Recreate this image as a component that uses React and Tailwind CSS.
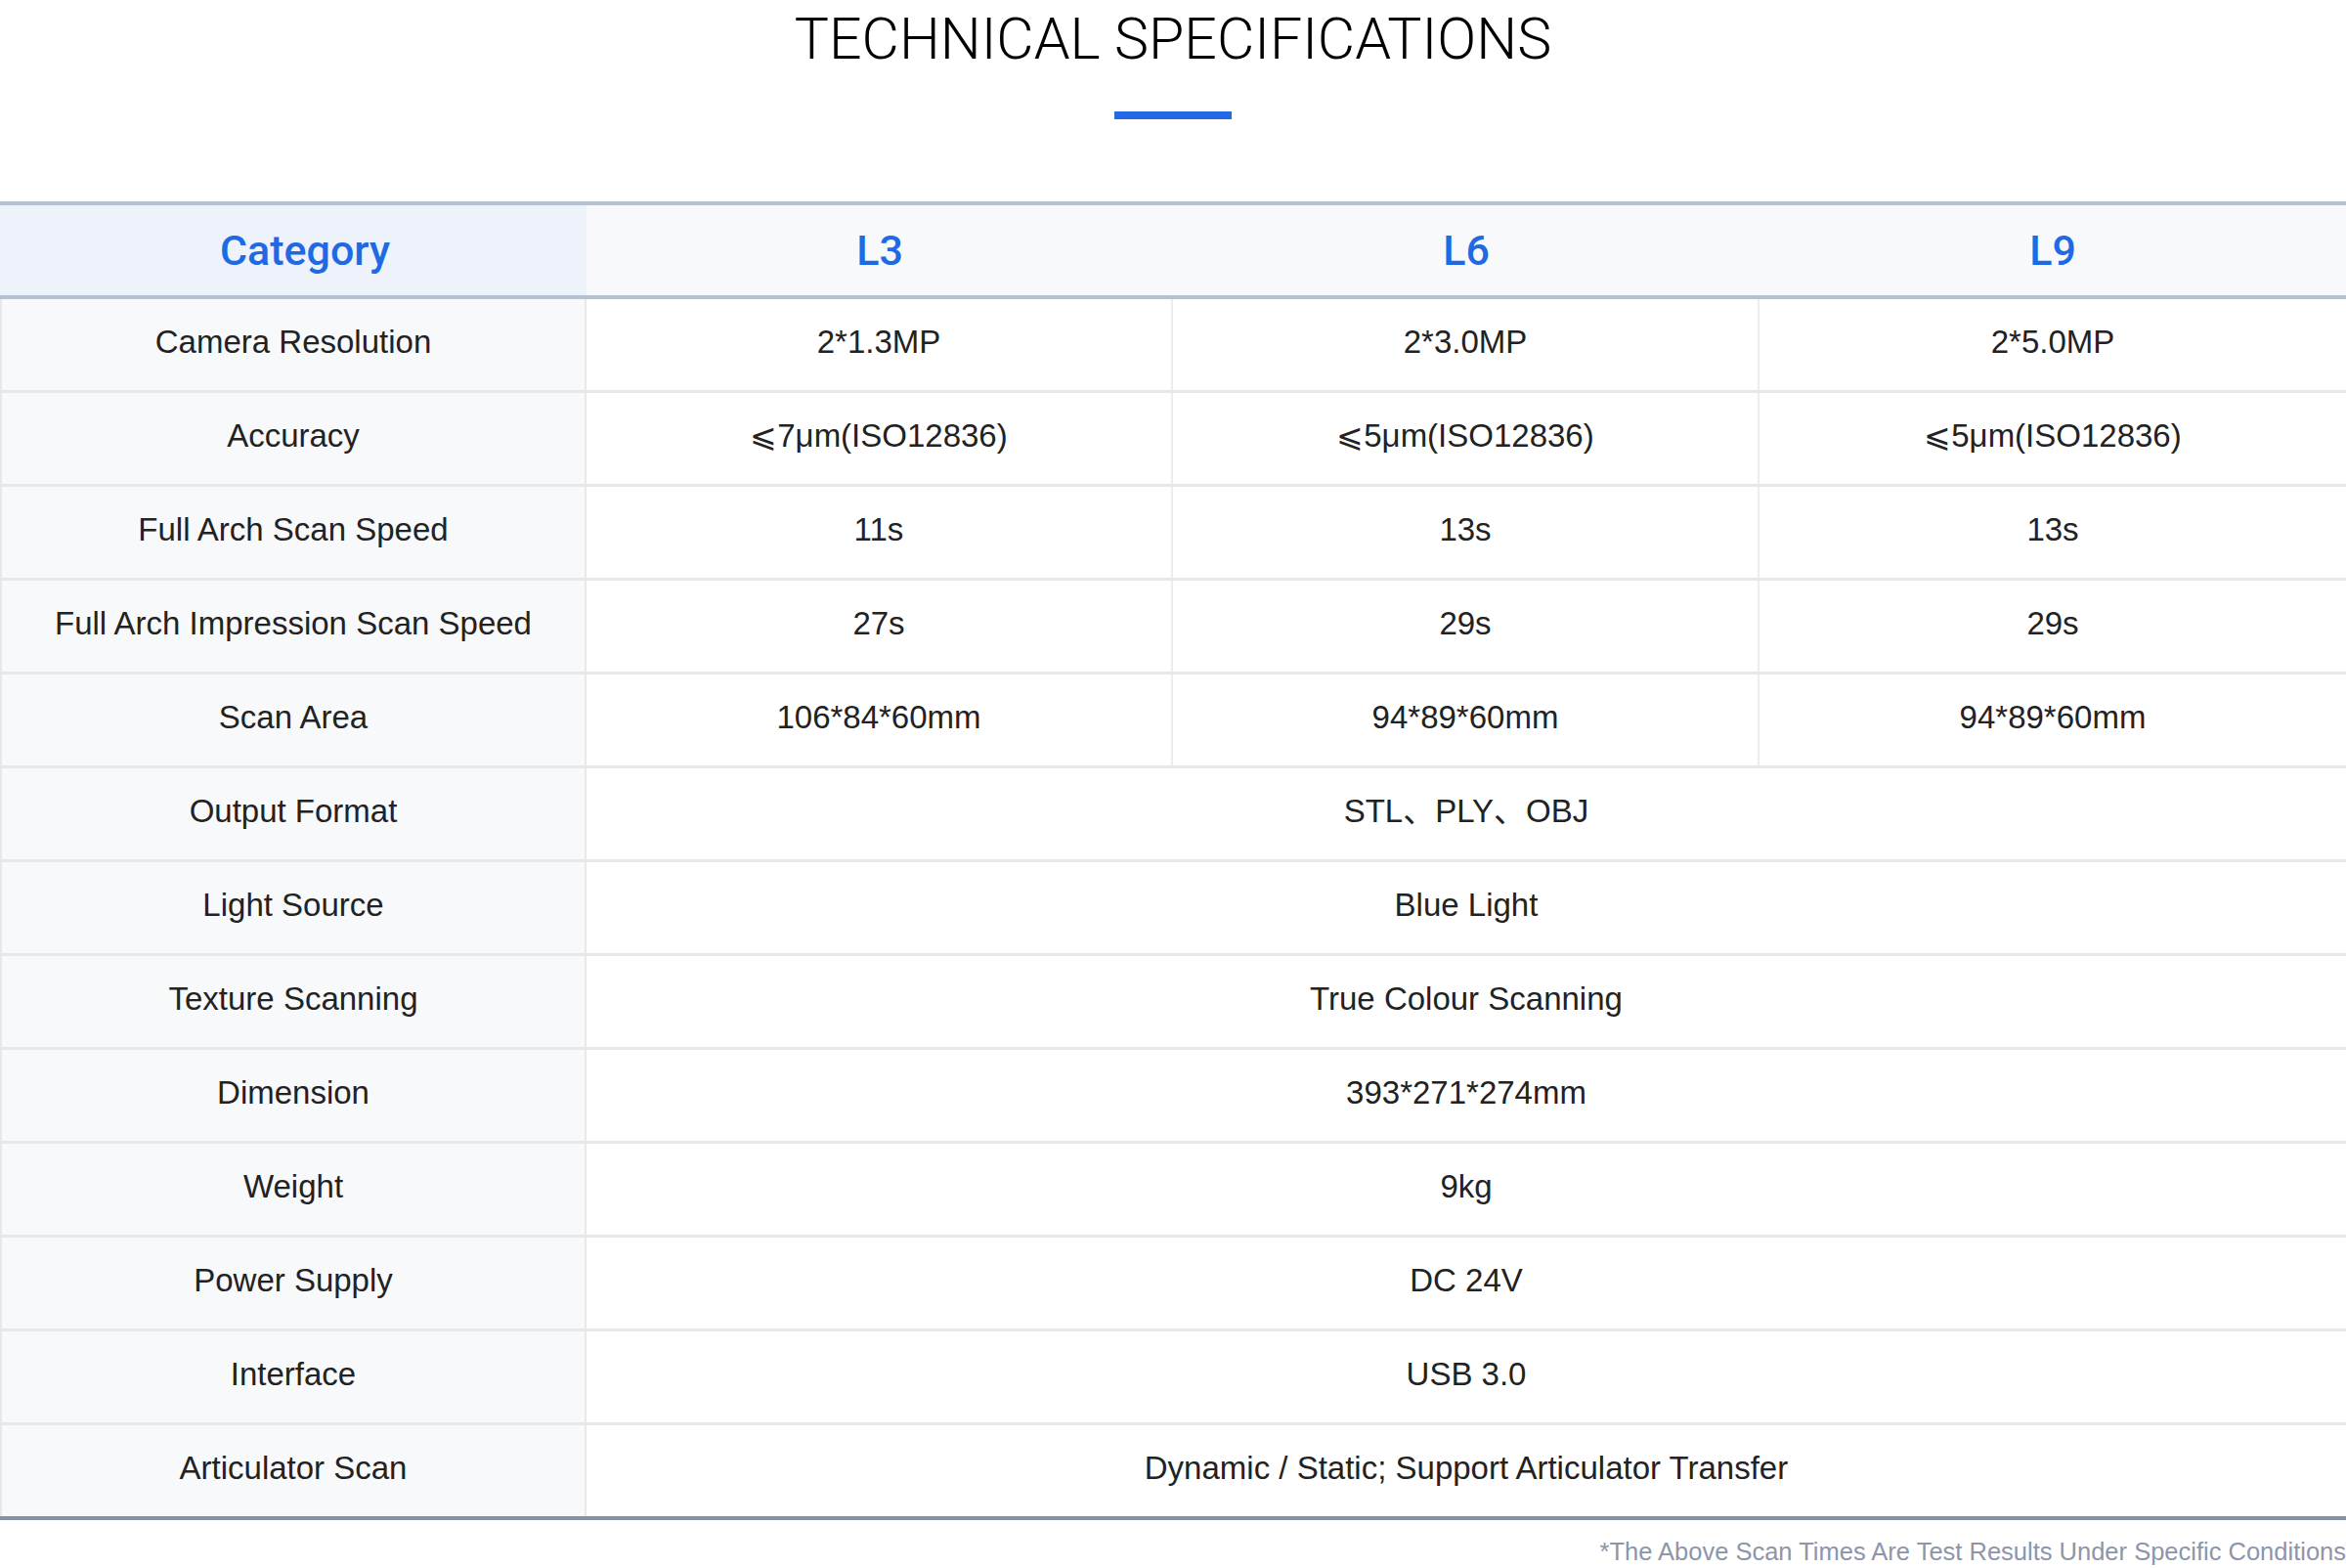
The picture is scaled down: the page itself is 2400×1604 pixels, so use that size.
const models = ['L3', 'L6', 'L9'];

const specs = [
  { label: 'Camera Resolution', values: ['2*1.3MP', '2*3.0MP', '2*5.0MP'] },
  { label: 'Accuracy', values: ['⩽7μm(ISO12836)', '⩽5μm(ISO12836)', '⩽5μm(ISO12836)'] },
  { label: 'Full Arch Scan Speed', values: ['11s', '13s', '13s'] },
  { label: 'Full Arch Impression Scan Speed', values: ['27s', '29s', '29s'] },
  { label: 'Scan Area', values: ['106*84*60mm', '94*89*60mm', '94*89*60mm'] },
  { label: 'Output Format', value: 'STL、PLY、OBJ' },
  { label: 'Light Source', value: 'Blue Light' },
  { label: 'Texture Scanning', value: 'True Colour Scanning' },
  { label: 'Dimension', value: '393*271*274mm' },
  { label: 'Weight', value: '9kg' },
  { label: 'Power Supply', value: 'DC 24V' },
  { label: 'Interface', value: 'USB 3.0' },
  { label: 'Articulator Scan', value: 'Dynamic / Static; Support Articulator Transfer' },
];

const bodyFont = "font-['Liberation_Sans','Noto_Sans_CJK_SC',sans-serif]";

function SpecRow({ spec, last }) {
  return (
    <div className={`grid grid-cols-4 ${last ? 'h-[93px]' : 'h-[96px] border-b-[3px] border-[#e8e8e8]'}`}>
      <div className="flex items-center justify-center pb-[5px] bg-[#f8f9fb] border-l-2 border-r-2 border-[#e8e8e8]">
        {spec.label}
      </div>
      {spec.values ? (
        spec.values.map((v, i) => (
          <div
            key={i}
            className={`flex items-center justify-center pb-[5px] bg-white ${i < 2 ? 'border-r-2 border-[#ececec]' : ''}`}
          >
            {v}
          </div>
        ))
      ) : (
        <div className="col-span-3 flex items-center justify-center pb-[5px] bg-white">{spec.value}</div>
      )}
    </div>
  );
}

export default function App() {
  return (
    <div className="w-[2400px] h-[1604px] bg-white overflow-hidden">
      <div className="pt-[11px] text-center">
        <h1 className="font-['Roboto',sans-serif] font-light text-[59px] leading-[58px] text-black">
          TECHNICAL SPECIFICATIONS
        </h1>
      </div>
      <div className="mx-auto mt-[45px] w-[120px] h-[8px] bg-[#2369e3]" />

      <div className={`mt-[84px] border-t-4 border-b-4 border-t-[#b5c0d3] border-b-[#8791a6] ${bodyFont}`}>
        <div className="grid grid-cols-4 h-[96px] border-b-4 border-[#b5c0d3] font-['Roboto',sans-serif] font-medium text-[43px] text-[#1f6ae2]">
          <div className="flex items-center justify-center pl-[24px] bg-[#edf2fb]">Category</div>
          {models.map((m) => (
            <div key={m} className="flex items-center justify-center bg-[#f8f9fb]">
              {m}
            </div>
          ))}
        </div>

        <div className="text-[33px] text-[#222]">
          {specs.map((s, i) => (
            <SpecRow key={s.label} spec={s} last={i === specs.length - 1} />
          ))}
        </div>
      </div>

      <p className={`mt-[20px] text-right text-[25.5px] leading-[24px] text-[#8c95aa] ${bodyFont}`}>
        *The Above Scan Times Are Test Results Under Specific Conditions
      </p>
    </div>
  );
}
